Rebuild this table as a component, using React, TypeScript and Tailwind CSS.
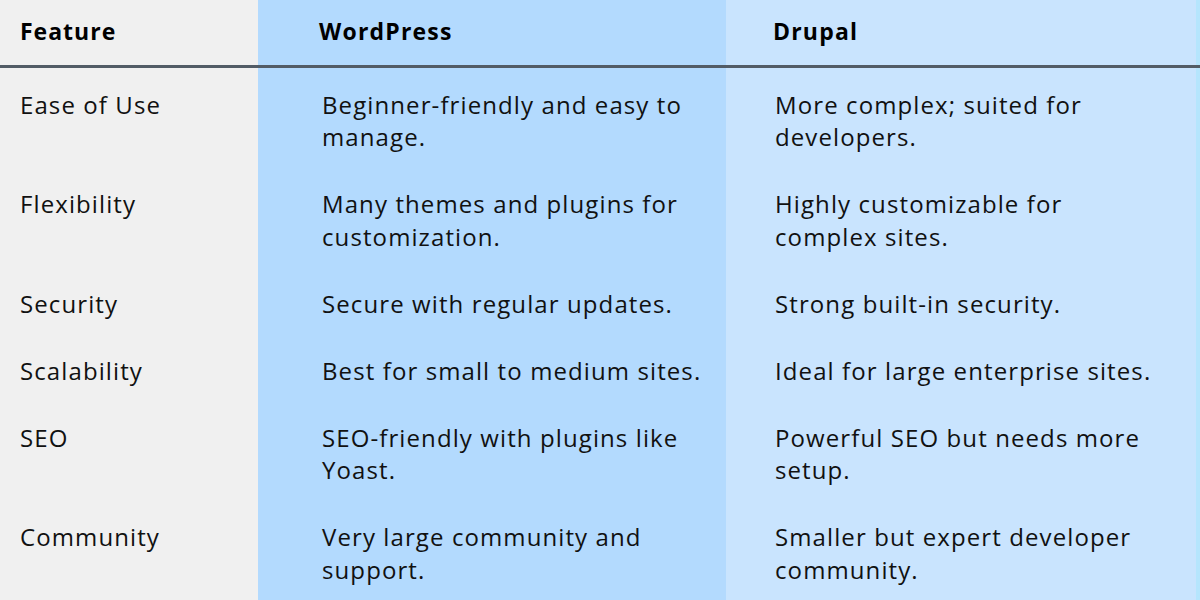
const rows = [
  {
    feature: "Ease of Use",
    wordpress: "Beginner-friendly and easy to\nmanage.",
    drupal: "More complex; suited for\ndevelopers.",
  },
  {
    feature: "Flexibility",
    wordpress: "Many themes and plugins for\ncustomization.",
    drupal: "Highly customizable for\ncomplex sites.",
  },
  {
    feature: "Security",
    wordpress: "Secure with regular updates.",
    drupal: "Strong built-in security.",
  },
  {
    feature: "Scalability",
    wordpress: "Best for small to medium sites.",
    drupal: "Ideal for large enterprise sites.",
  },
  {
    feature: "SEO",
    wordpress: "SEO-friendly with plugins like\nYoast.",
    drupal: "Powerful SEO but needs more\nsetup.",
  },
  {
    feature: "Community",
    wordpress: "Very large community and\nsupport.",
    drupal: "Smaller but expert developer\ncommunity.",
  },
];

export default function App() {
  return (
    <div className="grid h-[600px] w-[1200px] grid-cols-[258px_468px_474px] grid-rows-[65px_3px_repeat(6,auto)_1fr] font-['Open_Sans',sans-serif] text-[#111]">
      <div className="flex items-center bg-[#f0f0f0] pb-[3px] pl-5 text-[23px] font-bold tracking-[1px] text-black">Feature</div>
      <div className="flex items-center bg-[#b3dafe] pb-[3px] pl-[61px] text-[23px] font-bold tracking-[1.2px] text-black">WordPress</div>
      <div className="flex items-center border-r-4 border-[#b5e5fd] bg-[#c9e4fe] pb-[3px] pl-[47px] text-[23px] font-bold tracking-[1.2px] text-black">Drupal</div>

      <div className="col-span-3 bg-[#525c66]" />

      {rows.map((row, i) => (
        <div key={row.feature} className="contents">
          <div className={`bg-[#f0f0f0] pl-5 pb-[17px] text-[24px] leading-[32.5px] tracking-[1.1px] ${i === 0 ? "pt-[20.5px]" : "pt-[17.5px]"}`}>
            {row.feature}
          </div>
          <div className={`whitespace-pre-line bg-[#b3dafe] pl-16 pb-[17px] text-[24px] leading-[32.5px] tracking-[1.1px] ${i === 0 ? "pt-[20.5px]" : "pt-[17.5px]"}`}>
            {row.wordpress}
          </div>
          <div className={`whitespace-pre-line border-r-4 border-[#b5e5fd] bg-[#c9e4fe] pl-[49px] pb-[17px] text-[24px] leading-[32.5px] tracking-[1.1px] ${i === 0 ? "pt-[20.5px]" : "pt-[17.5px]"}`}>
            {row.drupal}
          </div>
        </div>
      ))}

      <div className="bg-[#f0f0f0]" />
      <div className="bg-[#b3dafe]" />
      <div className="border-r-4 border-[#b5e5fd] bg-[#c9e4fe]" />
    </div>
  );
}
